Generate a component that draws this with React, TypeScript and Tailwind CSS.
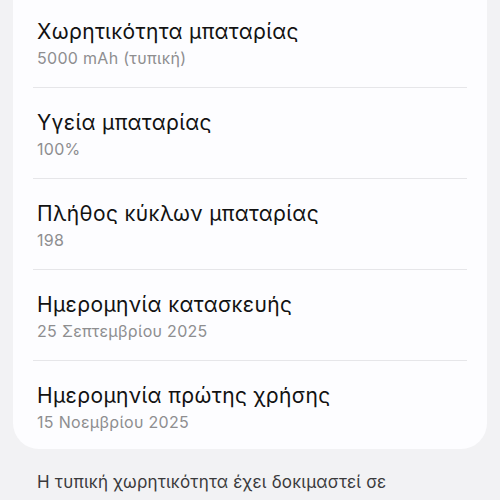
const rows = [
  { title: 'Χωρητικότητα μπαταρίας', value: '5000 mAh (τυπική)' },
  { title: 'Υγεία μπαταρίας', value: '100%' },
  { title: 'Πλήθος κύκλων μπαταρίας', value: '198' },
  { title: 'Ημερομηνία κατασκευής', value: '25 Σεπτεμβρίου 2025' },
  { title: 'Ημερομηνία πρώτης χρήσης', value: '15 Νοεμβρίου 2025' },
]

export default function App() {
  return (
    <div
      className="min-h-[500px] h-[500px] bg-[#f2f2f4] px-[13px] overflow-hidden"
      style={{ fontFamily: 'Inter, "Noto Sans", sans-serif' }}
    >
      <div className="-mt-[3px] bg-[#fdfdff] rounded-b-[26px] px-5">
        {rows.map((row, i) => (
          <div
            key={row.title}
            className={
              i < rows.length - 1
                ? 'pt-[22px] pb-[18px] px-1 border-b border-[#e6e6e9]'
                : 'pt-[22px] pb-[16px] px-1'
            }
          >
            <div className="text-[21px] leading-[26px] tracking-[0.35px] text-[#121212]">{row.title}</div>
            <div className="mt-0.5 text-[16px] leading-[22px] tracking-[0.3px] text-[#8e8e90]">{row.value}</div>
          </div>
        ))}
      </div>
      <p className="mt-[18px] px-6 text-[17px] leading-[30px] tracking-[0.2px] text-[#3a3a3c]">
        Η τυπική χωρητικότητα έχει δοκιμαστεί σε εργαστηριακές συνθήκες.
      </p>
    </div>
  )
}
